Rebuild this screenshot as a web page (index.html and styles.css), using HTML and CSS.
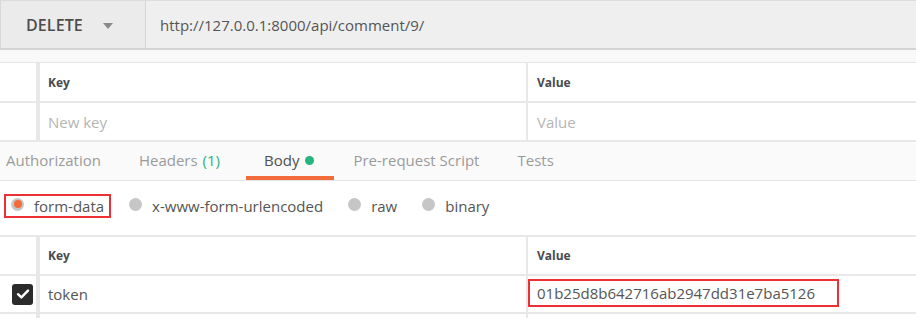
FILE: index.html
```html
<!DOCTYPE html>
<html>
<head>
<meta charset="utf-8">
<link rel="stylesheet" href="styles.css">
</head>
<body>
<div class="urlbar">
  <div class="method"><span class="method-name">DELETE</span><span class="caret"></span></div>
  <div class="url">http://127.0.0.1:8000/api/comment/9/</div>
</div>
<div class="band"></div>
<div class="kv">
  <div class="row head">
    <div class="c0"></div>
    <div class="ck">Key</div>
    <div class="cv">Value</div>
  </div>
  <div class="row">
    <div class="c0"></div>
    <div class="ck ph">New key</div>
    <div class="cv ph">Value</div>
  </div>
</div>
<div class="tabs">
  <div class="tab">Authorization</div>
  <div class="tab">Headers <span class="count">(1)</span></div>
  <div class="tab active">Body <span class="dot"></span></div>
  <div class="tab">Pre-request Script</div>
  <div class="tab">Tests</div>
</div>
<div class="modes">
  <div class="mode selected highlight"><span class="radio"></span>form-data</div>
  <div class="mode"><span class="radio"></span>x-www-form-urlencoded</div>
  <div class="mode"><span class="radio"></span>raw</div>
  <div class="mode"><span class="radio"></span>binary</div>
</div>
<div class="kv body-kv">
  <div class="row head">
    <div class="c0"></div>
    <div class="ck">Key</div>
    <div class="cv">Value</div>
  </div>
  <div class="row">
    <div class="c0"><span class="check"><svg width="14" height="12" viewBox="0 0 14 12"><path d="M2 6.2 L5.4 9.4 L12 2.6" fill="none" stroke="#fff" stroke-width="2.4" stroke-linecap="round" stroke-linejoin="round"/></svg></span></div>
    <div class="ck val">token</div>
    <div class="cv val"><span class="boxed">01b25d8b642716ab2947dd31e7ba5126</span></div>
  </div>
  <div class="row tail">
    <div class="c0"></div>
    <div class="ck"></div>
    <div class="cv"></div>
  </div>
</div>
</body>
</html>
```
FILE: styles.css
```css
* { box-sizing: border-box; }
html, body { margin: 0; padding: 0; }
body {
  width: 916px;
  height: 318px;
  overflow: hidden;
  background: #fff;
  font-family: "Open Sans", "Noto Sans", sans-serif;
  color: #505050;
}
.urlbar {
  display: flex;
  height: 50px;
  border-top: 1px solid #dcdcdc;
  border-bottom: 2px solid #d4d4d4;
  background: #efefef;
}
.method {
  width: 146px;
  display: flex;
  align-items: center;
  padding-left: 25px;
  background: #ebebeb;
  border-left: 1px solid #d8d8d8;
  border-right: 1px solid #d6d6d6;
}
.method-name {
  font-size: 16px;
  font-weight: 600;
  color: #4d4d4d;
  letter-spacing: 0.1px;
}
.caret {
  margin-left: 20px;
  width: 0;
  height: 0;
  border-left: 5px solid transparent;
  border-right: 5px solid transparent;
  border-top: 6px solid #8a8a8a;
  margin-top: 2px;
}
.url {
  flex: 1;
  display: flex;
  align-items: center;
  padding-left: 14px;
  font-size: 15px;
  color: #555;
}
.band {
  height: 13px;
  background: #f9f9f9;
  border-bottom: 1px solid #e6e6e6;
}
.kv .row {
  display: flex;
  height: 40px;
  border-bottom: 2px solid #e8e8e8;
}
.kv .row + .row { height: 39px; }
.kv .c0 {
  width: 40px;
  border-right: 4px solid #e8e8e8;
  display: flex;
  align-items: center;
  justify-content: flex-start;
  padding-left: 12px;
}
.kv .ck {
  width: 488px;
  border-right: 2px solid #e8e8e8;
  display: flex;
  align-items: center;
  padding-left: 8px;
  font-size: 15px;
}
.kv .cv {
  flex: 1;
  display: flex;
  align-items: center;
  padding-left: 9px;
  font-size: 15px;
}
.kv .head .ck, .kv .head .cv {
  font-size: 12px;
  font-weight: 700;
  color: #4a4a4a;
}
.kv .ph { color: #b5b5b5; }
.kv .val { color: #555; }
.tabs {
  display: flex;
  height: 39px;
  background: #fafafa;
  border-bottom: 1px solid #e4e4e4;
}
.tab {
  display: flex;
  align-items: center;
  padding: 1px 19px 0;
  font-size: 15px;
  color: #9a9a9a;
  border-bottom: 4px solid transparent;
}
.tab:first-child { margin-left: -13px; }
.tab.active {
  color: #505050;
  border-bottom-color: #f26b3a;
  padding: 1px 20px 0 18px;
  margin-left: 7px;
}
.count { color: #26b47f; margin-left: 5px; }
.dot {
  display: inline-block;
  width: 9px;
  height: 9px;
  border-radius: 50%;
  background: #26b47f;
  margin-left: 6px;
  margin-top: 2px;
}
.modes {
  display: flex;
  align-items: center;
  gap: 25px;
  height: 56px;
  padding: 0 0 4px 11px;
  border-bottom: 2px solid #e8e8e8;
}
.mode {
  display: flex;
  align-items: center;
  font-size: 15px;
  color: #555;
  height: 24px;
}
.mode .radio {
  width: 13px;
  height: 13px;
  border-radius: 50%;
  background: #c6c6c6;
  margin-right: 10px;
  margin-top: -4px;
  display: flex;
  align-items: center;
  justify-content: center;
}
.mode.selected .radio::after {
  content: "";
  width: 8px;
  height: 8px;
  border-radius: 50%;
  background: #f26b3a;
}
.mode.highlight {
  border: 2px solid #ee2f33;
  padding: 0 5px;
  margin: 0 -7px;
}
.body-kv .row.head { height: 39px; }
.body-kv .row + .row { height: 38px; }
.body-kv .row.tail { height: 4px; border-bottom: 0; }
.check {
  width: 21px;
  height: 21px;
  border-radius: 3px;
  background: #2b2b2b;
  display: flex;
  align-items: center;
  justify-content: center;
}
.boxed {
  border: 2px solid #ee2f33;
  margin-left: -9px;
  margin-top: -2px;
  padding: 0 0 0 7px;
  width: 311px;
  height: 28px;
  display: flex;
  align-items: center;
}
```
